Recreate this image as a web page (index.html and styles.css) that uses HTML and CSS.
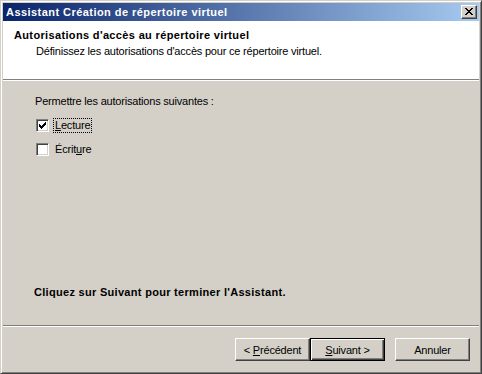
FILE: index.html
```html
<!DOCTYPE html>
<html lang="fr">
<head>
<meta charset="utf-8">
<title>Assistant Création de répertoire virtuel</title>
<link rel="stylesheet" href="styles.css">
</head>
<body>
<div class="window">
  <div class="titlebar">
    <span class="title-text">Assistant Création de répertoire virtuel</span>
    <button class="close-btn" aria-label="Fermer">
      <svg width="8" height="7" viewBox="0 0 8 7"><path d="M0 0h2v1h-2zM6 0h2v1h-2zM1 1h2v1h-2zM5 1h2v1h-2zM2 2h4v1h-4zM3 3h2v1h-2zM2 4h4v1h-4zM1 5h2v1h-2zM5 5h2v1h-2zM0 6h2v1h-2zM6 6h2v1h-2z" fill="#000"/></svg>
    </button>
  </div>
  <div class="header">
    <div class="header-title">Autorisations d'accès au répertoire virtuel</div>
    <div class="header-sub">Définissez les autorisations d'accès pour ce répertoire virtuel.</div>
  </div>
  <div class="body">
    <div class="intro">Permettre les autorisations suivantes :</div>
    <label class="check">
      <span class="box checked">
        <svg width="7" height="7" viewBox="0 0 7 7"><path d="M6 0h1v1h-1zM5 1h2v1h-2zM0 2h1v1h-1zM4 2h3v1h-3zM0 3h2v1h-2zM3 3h3v1h-3zM0 4h5v1h-5zM1 5h3v1h-3zM2 6h1v1h-1z" fill="#000"/></svg>
      </span>
      <span class="label focus"><u>L</u>ecture</span>
    </label>
    <label class="check">
      <span class="box"></span>
      <span class="label">Écrit<u>u</u>re</span>
    </label>
    <div class="spacer"></div>
    <div class="finish">Cliquez sur Suivant pour terminer l'Assistant.</div>
  </div>
  <div class="footer">
    <button class="btn">&lt; <u>P</u>récédent</button>
    <button class="btn default"><u>S</u>uivant &gt;</button>
    <button class="btn cancel">Annuler</button>
  </div>
</div>
</body>
</html>
```
FILE: styles.css
```css
* { box-sizing: border-box; }
html, body { margin: 0; padding: 0; }
body {
  width: 482px;
  height: 374px;
  font-family: "Liberation Sans", Arial, sans-serif;
  font-size: 11px;
  letter-spacing: -0.2px;
  color: #000;
  background: #d4d0c8;
}
.window {
  width: 482px;
  height: 374px;
  display: flex;
  flex-direction: column;
  background: #d4d0c8;
  border-top: 1px solid #d4d0c8;
  border-left: 1px solid #d4d0c8;
  border-right: 1px solid #404040;
  border-bottom: 1px solid #404040;
  box-shadow: inset 1px 1px 0 #fff, inset -1px -1px 0 #808080;
  padding: 2px;
}
.titlebar {
  height: 18px;
  flex: none;
  display: flex;
  align-items: center;
  justify-content: space-between;
  padding: 0 2px 0 3px;
  background: linear-gradient(to right, #0a246a, #a6caf0);
}
.title-text {
  color: #fff;
  font-weight: bold;
  font-size: 11px;
  letter-spacing: 0.45px;
  line-height: 13px;
}
.close-btn {
  width: 16px;
  height: 14px;
  padding: 0;
  margin: 0;
  display: flex;
  align-items: center;
  justify-content: center;
  background: #d4d0c8;
  border-top: 1px solid #fff;
  border-left: 1px solid #fff;
  border-right: 1px solid #404040;
  border-bottom: 1px solid #404040;
  box-shadow: inset -1px -1px 0 #808080;
}
.close-btn svg { display: block; margin-left: -1px; margin-top: -1px; }
.header {
  flex: none;
  height: 59px;
  background: #fff;
  padding: 8px 0 0 11px;
  border-bottom: 1px solid #808080;
  box-shadow: 0 1px 0 #fff;
}
.header-title {
  font-weight: bold;
  letter-spacing: 0.35px;
  line-height: 13px;
}
.header-sub {
  margin-top: 3px;
  padding-left: 22px;
  line-height: 13px;
}
.body {
  flex: 1;
  display: flex;
  flex-direction: column;
  padding: 14px 0 0 32px;
  border-bottom: 1px solid #808080;
  margin-top: 1px;
  box-shadow: 0 1px 0 #fff;
}
.intro {
  line-height: 13px;
  margin-bottom: 10px;
}
.check {
  display: flex;
  align-items: center;
  height: 15px;
  margin-bottom: 9px;
}
.box {
  width: 13px;
  height: 13px;
  margin-left: 1px;
  background: #fff;
  border-top: 1px solid #808080;
  border-left: 1px solid #808080;
  border-right: 1px solid #fff;
  border-bottom: 1px solid #fff;
  box-shadow: inset 1px 1px 0 #404040, inset -1px -1px 0 #d4d0c8;
  display: flex;
  align-items: center;
  justify-content: center;
}
.box svg { display: block; }
.label {
  margin-left: 4px;
  padding: 0 1px;
  line-height: 13px;
  border: 1px solid transparent;
}
.label.focus { border: 1px dotted #000; }
.spacer { flex: 1; }
.finish {
  font-weight: bold;
  letter-spacing: 0.3px;
  line-height: 13px;
  margin-left: -1px;
  margin-bottom: 26px;
}
.footer {
  flex: none;
  height: 44px;
  display: flex;
  align-items: flex-start;
  justify-content: flex-end;
  padding: 11px 9px 0 0;
  margin-top: 1px;
}
.btn {
  width: 75px;
  height: 23px;
  padding: 0;
  font-family: inherit;
  font-size: 11px;
  letter-spacing: -0.2px;
  color: #000;
  background: #d4d0c8;
  border-top: 1px solid #fff;
  border-left: 1px solid #fff;
  border-right: 1px solid #404040;
  border-bottom: 1px solid #404040;
  box-shadow: inset -1px -1px 0 #808080;
}
.btn.default {
  border: 1px solid #000;
  box-shadow: inset 1px 1px 0 #fff, inset -1px -1px 0 #404040, inset -2px -2px 0 #808080;
}
.btn.cancel { margin-left: 10px; }
u { text-decoration: underline; text-underline-offset: 1px; }
```
